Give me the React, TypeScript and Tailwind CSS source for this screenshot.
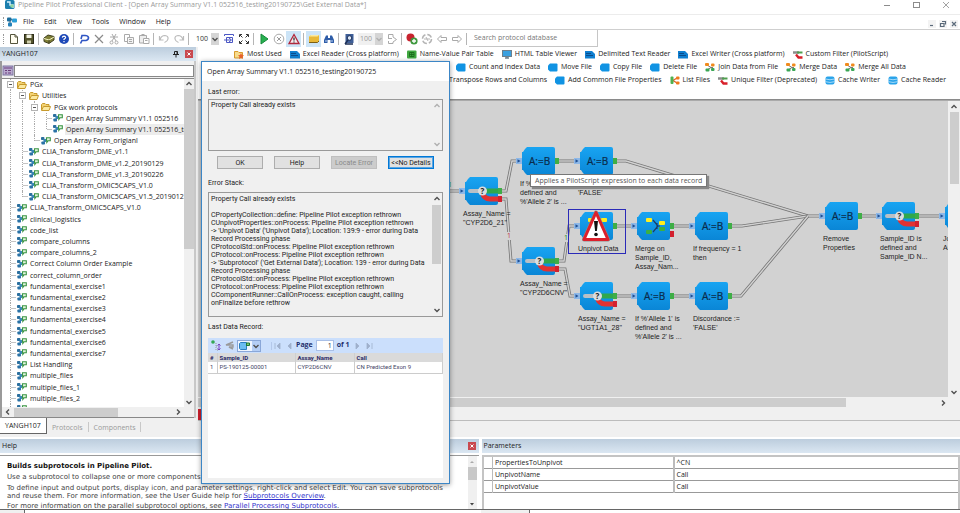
import type { ReactNode } from "react";

type TreeItem = { label: string; level: number; folder?: boolean; selected?: boolean; last?: boolean };

const TREE: TreeItem[] = [
	{ label: "PGx", level: 0, folder: true },
	{ label: "Utilities", level: 1, folder: true },
	{ label: "PGx work protocols", level: 2, folder: true },
	{ label: "Open Array Summary V1.1 052516", level: 3 },
	{ label: "Open Array Summary V1.1 052516_testing20190725", level: 3, selected: true, last: true },
	{ label: "Open Array Form_origianl", level: 2, last: true },
	{ label: "CLIA_Transform_DME_v1.1", level: 1 },
	{ label: "CLIA_Transform_DME_v1.2_20190129", level: 1 },
	{ label: "CLIA_Transform_DME_v1.3_20190226", level: 1 },
	{ label: "CLIA_Transform_OMIC5CAPS_V1.0", level: 1 },
	{ label: "CLIA_Transform_OMIC5CAPS_V1.5_20190122", level: 1, last: true },
	{ label: "CLIA_Transform_OMIC5CAPS_V1.0", level: 0 },
	{ label: "clinical_logistics", level: 0 },
	{ label: "code_list", level: 0 },
	{ label: "compare_columns", level: 0 },
	{ label: "compare_columns_2", level: 0 },
	{ label: "Correct Column Order Example", level: 0 },
	{ label: "correct_column_order", level: 0 },
	{ label: "fundamental_exercise1", level: 0 },
	{ label: "fundamental_exercise2", level: 0 },
	{ label: "fundamental_exercise3", level: 0 },
	{ label: "fundamental_exercise4", level: 0 },
	{ label: "fundamental_exercise5", level: 0 },
	{ label: "fundamental_exercise6", level: 0 },
	{ label: "fundamental_exercise7", level: 0 },
	{ label: "List Handling", level: 0 },
	{ label: "multiple_files", level: 0 },
	{ label: "multiple_files_1", level: 0 },
	{ label: "multiple_files_2", level: 0 },
	{ label: "multiple_files_3", level: 0 },
];

type NodeKind = "expr" | "split" | "unpivot" | "merge";
type CanvasNode = { x: number; y: number; kind: NodeKind; label: string[] };

const NODES: CanvasNode[] = [
	{ x: 267, y: 76, kind: "split", label: ["Assay_Name =", '"CYP2D6_21"'] },
	{ x: 324, y: 46, kind: "expr", label: ["If %'Allele 1' is", "defined and", "%'Allele 2' is ..."] },
	{ x: 382, y: 46, kind: "expr", label: ["Discordance", "'FALSE'"] },
	{ x: 382, y: 111, kind: "unpivot", label: ["Unpivot Data"] },
	{ x: 439, y: 111, kind: "merge", label: ["Merge on", "Sample_ID,", "Assay_Nam..."] },
	{ x: 497, y: 111, kind: "expr", label: ["If frequency = 1", "then"] },
	{ x: 324, y: 146, kind: "split", label: ["Assay_Name =", '"CYP2D6CNV"'] },
	{ x: 382, y: 181, kind: "split", label: ["Assay_Name =", '"UGT1A1_28"'] },
	{ x: 439, y: 181, kind: "expr", label: ["If %'Allele 1' is", "defined and", "%'Allele 2' is ..."] },
	{ x: 497, y: 181, kind: "expr", label: ["Discordance :=", "'FALSE'"] },
	{ x: 627, y: 101, kind: "expr", label: ["Remove", "Properties"] },
	{ x: 684, y: 101, kind: "split", label: ["Sample_ID is", "defined and", "Sample_ID N..."] },
	{ x: 747, y: 101, kind: "expr", label: ["Join", "Assay"] },
];

const LINKS = [
	"M240 90H261",
	"M304 90H308L314 60H318",
	"M361 60H376",
	"M419 60H428L610 115H621",
	"M534 125H544L610 115",
	"M534 195H543L610 115",
	"M304 98H308L313 160H318",
	"M361 160H366L371 125H376",
	"M361 168H367L372 195H376",
	"M419 195H433",
	"M476 195H491",
	"M419 125H433",
	"M476 125H491",
	"M664 115H678",
	"M721 115H741",
];

const STACK = [
	"Property Call already exists",
	"",
	"CPropertyCollection::define: Pipeline Pilot exception rethrown",
	"CUnpivotProperties::onProcess: Pipeline Pilot exception rethrown",
	"-> 'Unpivot Data' ('Unpivot Data'); Location: 139:9 - error during Data",
	"Record Processing phase",
	"CProtocolStd::onProcess: Pipeline Pilot exception rethrown",
	"CProtocol::onProcess: Pipeline Pilot exception rethrown",
	"-> 'Subprotocol' ('Get External Data'); Location: 139 - error during Data",
	"Record Processing phase",
	"CProtocolStd::onProcess: Pipeline Pilot exception rethrown",
	"CProtocol::onProcess: Pipeline Pilot exception rethrown",
	"CComponentRunner::CallOnProcess: exception caught, calling",
	"onFinalize before rethrow",
].join("\n");

/* ---------- Icons ---------- */

const Svg = ({ w = 12, h = 12, children }: { w?: number; h?: number; children: ReactNode }) => (
	<svg width={w} height={h} viewBox={`0 0 ${w} ${h}`} fill="none" className="shrink-0" aria-hidden="true">
		{children}
	</svg>
);

const ProtocolIcon = () => (
	<Svg w={10} h={8}>
		<rect x="0" y="0" width="3.4" height="3" rx="0.8" fill="#2b6f9e" />
		<rect x="2.4" y="2" width="3" height="3" rx="0.8" fill="#3a86b8" />
		<rect x="0.4" y="4.4" width="3.6" height="3.2" rx="0.8" fill="#2a72a6" />
		<path d="M5.5 0.8H9.3V3.8H7L5.8 5.4V3.8H5.5Z" fill="#e2f4dc" stroke="#3a9444" strokeWidth="1.1" />
	</Svg>
);

const FolderIcon = () => (
	<Svg w={10} h={8}>
		<path d="M0.5 7V1.5L1.5 0.5H4L5 1.5H8V3" fill="#f3d272" stroke="#c79a2c" />
		<path d="M0.5 7.5L2.5 3.5H9.5L8 7.5Z" fill="#fbe9a0" stroke="#c79a2c" />
	</Svg>
);

const Chevron = ({ dir, light }: { dir: "up" | "down" | "left" | "right"; light?: boolean }) => {
	const d = { up: "M1.5 5L4 2.5L6.5 5", down: "M1.5 3L4 5.5L6.5 3", left: "M5 1.5L2.5 4L5 6.5", right: "M3 1.5L5.5 4L3 6.5" };
	return (
		<Svg w={8} h={8}>
			<path d={d[dir]} stroke={light ? "#b0b0b0" : "#505050"} strokeWidth="1.4" />
		</Svg>
	);
};

type PaletteKind = "fav" | "reader" | "table" | "monitor" | "filter" | "file" | "join" | "list" | "cache";

const PaletteIcon = ({ kind }: { kind: PaletteKind }) => (
	<Svg w={10} h={9}>
		{kind === "fav" && (
			<>
				<path d="M0.5 8V1.5H4L5 2.5H8.5V8Z" fill="#f8dc8c" stroke="#d79a2c" />
				<path d="M7 3L8 5L10 5.3L8.5 6.7L9 9L7 7.8L5 9L5.5 6.7L4 5.3L6 5Z" fill="#e8622c" />
			</>
		)}
		{kind === "reader" && (
			<>
				<path d="M0 1H7L10 4V8.5H0Z" fill="#0f7fd0" />
				<path d="M1 3.5H6M1 5.5H8" stroke="#0a4c8c" />
			</>
		)}
		{kind === "table" && (
			<>
				<rect y="0.5" width="9.5" height="8" rx="1" fill="#3fa83f" />
				<path d="M2.5 2.5H7V6.5H2.5ZM2.5 4.5H7M4.7 2.5V6.5" stroke="#176417" strokeWidth="0.8" />
			</>
		)}
		{kind === "monitor" && (
			<>
				<rect x="0.5" y="0.5" width="9" height="6" fill="#3aa0e0" stroke="#6d7f8c" />
				<path d="M3 8H7M5 6.5V8" stroke="#6d7f8c" strokeWidth="1.5" />
			</>
		)}
		{kind === "filter" && (
			<>
				<path d="M0 2.5H6" stroke="#8d8d8d" strokeWidth="2.5" />
				<path d="M4 2.5H9.5" stroke="#4f9f4f" strokeWidth="2" />
				<path d="M3 4.5L5.5 7.5H9.5" stroke="#d8202a" strokeWidth="2.4" />
			</>
		)}
		{kind === "file" && <path d="M2 0.5H8.5Q9.5 0.5 9.5 1.5V7.5Q9.5 8.5 8.5 8.5H2L0 6.5V2.5Z" fill="#1093e3" />}
		{kind === "join" && (
			<>
				<path d="M2 2L6 4.5L2 7M6 4.5H8" stroke="#777" />
				<rect x="0" y="0" width="4" height="3" rx="1" fill="#f08a1c" />
				<rect x="0.5" y="5.5" width="4" height="3" rx="1" fill="#3aa655" />
				<rect x="6" y="0.5" width="3.5" height="3" rx="1" fill="#f08a1c" />
				<rect x="6" y="5" width="3.5" height="3" rx="1" fill="#3aa655" />
			</>
		)}
		{kind === "list" && (
			<>
				<path d="M3 4.5L7 2M3 4.5L7 7" stroke="#e0602c" strokeWidth="1.4" />
				<rect x="0.5" y="0.5" width="3" height="7.5" rx="1" fill="#4fb04f" />
				<rect x="6" y="0.5" width="3.5" height="3" rx="1" fill="#f07a1c" />
				<rect x="6" y="5.5" width="3.5" height="3" rx="1" fill="#f07a1c" />
			</>
		)}
		{kind === "cache" && (
			<>
				<rect x="0.5" y="0.5" width="9" height="8" rx="2" fill="#29a3ea" />
				<path d="M0.5 3Q5 4.5 9.5 3M0.5 5.7Q5 7.2 9.5 5.7" stroke="#c6e8fb" strokeWidth="0.8" />
			</>
		)}
	</Svg>
);

/* ---------- Title, menu and toolbar ---------- */

const TitleBar = () => (
	<header className="flex h-[15px] shrink-0 items-start border-b border-[#ececec] bg-white pl-[5px] leading-[10px] text-[#9a9a9a]">
		<Svg w={10} h={10}>
			<rect width="9.5" height="9" rx="1.5" fill="#1c7fae" />
			<path d="M2 2H5V5H8V8" stroke="#d6f2ff" strokeWidth="1.4" />
			<circle cx="7" cy="6" r="1.8" fill="#8fd6a0" />
		</Svg>
		<h1 className="ml-[3px] text-[7px]">
			Pipeline Pilot Professional Client - [Open Array Summary V1.1 052516_testing20190725\Get External Data*]
		</h1>
		<div className="ml-auto flex gap-[17px] pr-[9px]">
			<button type="button" aria-label="Minimize">
				<Svg>
					<path d="M3 5.5H9" stroke="#8c8c8c" />
				</Svg>
			</button>
			<button type="button" aria-label="Maximize">
				<Svg>
					<rect x="3.5" y="2.5" width="6" height="5" stroke="#8c8c8c" />
				</Svg>
			</button>
			<button type="button" aria-label="Close">
				<Svg>
					<path d="M4 2L10 8M10 2L4 8" stroke="#8c8c8c" strokeWidth="0.8" />
				</Svg>
			</button>
		</div>
	</header>
);

const MENU = ["File", "Edit", "View", "Tools", "Window", "Help"];

const MenuBar = () => (
	<nav className="flex h-[15px] shrink-0 items-center border-b border-[#cfcfcf] bg-white pl-[3px] text-[7px] text-[#222]">
		<span className="h-[10px] w-px border-l border-dotted border-[#999]" />
		<span className="ml-[3px]">
			<Svg w={10} h={10}>
				<path d="M3 2L8 4M3 3V8" stroke="#666" />
				<rect x="0" y="0.5" width="4.5" height="4" rx="1" fill="#1d6d9c" />
				<rect x="5" y="1.5" width="5" height="4" rx="1" fill="#2b9fd8" />
				<rect x="1" y="5.5" width="4" height="4" rx="1" fill="#2480b8" />
			</Svg>
		</span>
		<ul className="ml-[6px] flex gap-[10px]">
			{MENU.map((m) => (
				<li key={m}>
					<button type="button">{m}</button>
				</li>
			))}
		</ul>
		<div className="ml-auto flex gap-[3px] self-end pr-[2px] pb-px">
			{["M2 5.5H5", "M3 1.5H6.5V4.5M1.5 3.5H5V6.5H1.5Z", "M2 2L6 6M6 2L2 6"].map((d, i) => (
				<button key={d} type="button" aria-label={["Minimize document", "Restore document", "Close document"][i]} className="bg-[#f3f3f3]">
					<Svg w={8} h={8}>
						<path d={d} stroke="#5b6a7a" strokeWidth="1.2" />
					</Svg>
				</button>
			))}
		</div>
	</nav>
);

const Sep = () => (
	<span className="flex w-[5px] shrink-0 justify-center">
		<span className="h-[12px] w-px bg-[#b5b5b5]" />
	</span>
);

const Tool = ({ label, on, children }: { label: string; on?: boolean; children: ReactNode }) => (
	<button
		type="button"
		aria-label={label}
		className={`flex h-[16px] w-[15px] shrink-0 items-center justify-center ${on ? "bg-[#cce4f7]" : ""}`}
	>
		<Svg>{children}</Svg>
	</button>
);

const Zoom = ({ label, muted }: { label: string; muted?: boolean }) => (
	<label className={`relative flex h-[12px] items-center ${muted ? "bg-[#f0f0f0] text-[#999]" : "text-[#333]"}`}>
		<select
			aria-label={label}
			defaultValue="100"
			disabled={muted}
			className="h-[12px] w-[25px] appearance-none bg-transparent pl-[2px] text-[7px] leading-[12px]"
		>
			<option>100</option>
		</select>
		<span className="pointer-events-none absolute top-0 right-0 flex h-[12px] w-[8px] items-center bg-[#d5d5d5]">
			<Chevron dir="down" light={muted} />
		</span>
	</label>
);

const Toolbar = () => (
	<div className="flex h-[17px] shrink-0 items-center bg-white pl-[3px]" role="toolbar" aria-label="Standard">
		<span className="h-[10px] w-px border-l border-dotted border-[#999]" />
		<span className="w-[2px]" />
		<Tool label="New">
			<path d="M2.5 1.5H7L9.5 4V10.5H2.5Z" fill="#fffdf0" stroke="#54543c" />
			<path d="M7 1.5V4H9.5" stroke="#54543c" />
		</Tool>
		<Tool label="Save">
			<rect x="1.5" y="1.5" width="9" height="9" fill="#55552d" stroke="#2c2c18" />
			<rect x="3.5" y="1.5" width="5" height="3.5" fill="#f3f3e4" />
			<rect x="4" y="7.5" width="4" height="3" fill="#cfcfae" />
		</Tool>
		<Sep />
		<Tool label="Package">
			<path d="M1 5L5 2L11 3.5V7L6 10.5L1 8.5Z" fill="#7f7f36" stroke="#3f3f20" />
			<path d="M1 5.5L6 7L11 4" stroke="#f5f5c8" />
			<path d="M6 7V10" stroke="#3f3f20" />
		</Tool>
		<Tool label="Help">
			<circle cx="6" cy="6" r="5" fill="#1e49b8" />
			<path d="M4.3 4.6Q4.5 3.2 6 3.2Q7.7 3.3 7.6 4.6Q7.4 5.5 6 6.2V7M6 8V9.2" stroke="#fff" strokeWidth="1.2" />
		</Tool>
		<Sep />
		<Tool label="Comment">
			<path d="M2.5 10.5L4 7.5H8Q10.5 7 10.5 4.5Q10 2.5 7 2.5H4L3 6" stroke="#2f55c4" strokeWidth="1.6" />
		</Tool>
		<Tool label="Delete">
			<path d="M2 2L10 10M10 2L2 10" stroke="#8a8a8a" strokeWidth="1.2" />
		</Tool>
		<Tool label="Cut">
			<path d="M4 1L8 8M8 1L4 8M2 4H10" stroke="#aaa" />
			<circle cx="3.5" cy="9.5" r="1.5" stroke="#aaa" />
			<circle cx="8.5" cy="9.5" r="1.5" stroke="#aaa" />
		</Tool>
		<Tool label="Copy">
			<path d="M1.5 1.5H6.5V8.5H1.5Z" fill="#fff" stroke="#aaa" />
			<path d="M4.5 4.5H10.5V10.5H4.5ZM6 6.5H9M6 8.5H9" fill="#f4f4f4" stroke="#aaa" />
		</Tool>
		<Tool label="Paste">
			<path d="M1.5 2.5H8.5V10H1.5ZM3.5 1.5H6.5" fill="#eee" stroke="#aaa" />
			<path d="M5.5 5.5H11V10.5H5.5ZM7 7.5H9.5" fill="#fff" stroke="#aaa" />
		</Tool>
		<Sep />
		<Tool label="Undo">
			<path d="M1.5 3V7H5.5M2 7Q3 2.5 7 2.5Q10.5 3 10 6Q9.5 8.5 6.5 9.5" stroke="#bbb" strokeWidth="1.2" />
		</Tool>
		<Tool label="Redo">
			<path d="M10.5 3V7H6.5M10 7Q9 2.5 5 2.5Q1.5 3 2 6Q2.5 8.5 5.5 9.5" stroke="#bbb" strokeWidth="1.2" />
		</Tool>
		<Sep />
		<span className="w-[3px]" />
		<Zoom label="Zoom" />
		<span className="w-[2px]" />
		<Tool label="Fit to window">
			<path d="M1.5 3V1.5H10.5V3M3.5 4.5H9.5V9.5H3.5Z" stroke="#4b57c4" />
			<path d="M1 7H8M6 5L8.5 7L6 9" stroke="#4b57c4" />
		</Tool>
		<Tool label="Full screen">
			<path d="M1.5 4V1.5H4M8 1.5H10.5V4M10.5 8V10.5H8M4 10.5H1.5V8M2 2L4.5 4.5M10 2L7.5 4.5M2 10L4.5 7.5M10 10L7.5 7.5" stroke="#333" />
		</Tool>
		<Sep />
		<Tool label="Run">
			<path d="M3 1L10 6L3 11Z" fill="#28b050" stroke="#168a3a" />
		</Tool>
		<Tool label="Stop">
			<circle cx="6" cy="6" r="4.8" stroke="#aaa" />
			<path d="M4 4L8 8M8 4L4 8" stroke="#999" />
		</Tool>
		<Tool label="Show errors" on>
			<path d="M6 1.5L11 10.5H1Z" fill="#f6e9ee" stroke="#b0283c" strokeWidth="1.3" />
			<path d="M6 4.5V7.5M6 8.5V9.5" stroke="#222" strokeWidth="1.2" />
		</Tool>
		<Sep />
		<Tool label="Palette" on>
			<path d="M1 3.5L3 2H11V8L9.5 9.5H1Z" fill="#e8b838" />
			<path d="M1 3.5L3 2H11L9.5 3.5Z" fill="#fbe9a0" />
			<path d="M1 9.5H9.5L11 8" stroke="#7c5f14" />
		</Tool>
		<Tool label="Find">
			<path d="M3 2.5H5V5H7V2.5H9L11 7V10H7.5V7H4.5V10H1V7Z" fill="#2f5da8" />
			<path d="M2 8H4M8 8H10" stroke="#bcd4f4" />
		</Tool>
		<Sep />
		<Tool label="Find in page">
			<rect x="2.5" y="1" width="8" height="9" fill="#3f5f98" />
			<circle cx="6.5" cy="5" r="2.3" fill="#dbe7f8" stroke="#1c2f56" />
			<path d="M5 7L2 11M2 11H10" stroke="#1c2f56" strokeWidth="1.4" />
		</Tool>
		<span className="w-[2px]" />
		<Zoom label="Page zoom" muted />
		<span className="w-px" />
		<Tool label="Page layout">
			<path d="M2.5 1.5H7V4L10.5 6.5L7 9V10.5H2.5V8M2 5.5H6M2.5 5V1.5" stroke="#aaa" />
		</Tool>
		<Sep />
		<Tool label="Check in">
			<circle cx="4.5" cy="4.5" r="4" fill="#c8232f" />
			<circle cx="8" cy="8" r="3.6" fill="#3f9a3f" />
			<path d="M6 8H10M8 6V10" stroke="#fff" strokeWidth="1.3" />
		</Tool>
		<Tool label="Refresh">
			<circle cx="6" cy="6" r="4.5" stroke="#b5b5b5" strokeDasharray="5 2" strokeWidth="1.5" />
			<path d="M3 6H9M5 4L7 8" stroke="#b5b5b5" />
		</Tool>
		<Tool label="Back">
			<path d="M1.5 6L5 2.5V4.5H10.5V7.5H5V9.5Z" stroke="#aaa" />
		</Tool>
		<Tool label="Forward">
			<path d="M10.5 6L7 2.5V4.5H1.5V7.5H7V9.5Z" stroke="#aaa" />
		</Tool>
		<Sep />
		<input
			type="search"
			aria-label="Search protocol database"
			placeholder="Search protocol database"
			className="h-[17px] w-[129px] border-r border-b border-[#c6c6c6] bg-white pb-px pl-[5px] text-[7px] placeholder:text-[#777]"
		/>
	</div>
);

/* ---------- Left dock ---------- */

const CloseBox = ({ label }: { label: string }) => (
	<button type="button" aria-label={label} className="flex size-[8px] items-center justify-center bg-[#c9494f]">
		<Svg w={8} h={8}>
			<path d="M2.5 2.5L5.5 5.5M5.5 2.5L2.5 5.5" stroke="#fff" />
		</Svg>
	</button>
);

const PaneHeader = ({ title, children }: { title: string; children?: ReactNode }) => (
	<div className="flex h-[14px] shrink-0 items-center justify-between bg-linear-to-b from-[#bccddd] to-[#dbe7f2] pr-[3px] pl-[2px] text-[7px] text-[#222]">
		<h2>{title}</h2>
		<div className="flex items-center gap-[6px]">{children}</div>
	</div>
);

const TreeRow = ({ item }: { item: TreeItem }) => (
	<li className="flex min-h-0 flex-1 items-center pl-1">
		{Array.from({ length: item.level + 1 }, (_, l) => {
			const own = l === item.level;
			return (
				<span key={l} className="flex w-3 shrink-0 self-stretch pl-[6px]">
					<span className={`w-px border-l border-dotted border-[#aaa] ${own && item.last ? "h-1/2" : ""}`} />
					{own && !item.folder && <span className="h-px w-[5px] self-center bg-[#c4c4c4]" />}
					{own && item.folder && (
						<span className="-ml-[4px] self-center">
							<Svg w={7} h={7}>
								<rect x="0.5" y="0.5" width="6" height="6" fill="#fff" stroke="#b4b4b4" />
								<path d="M2 3.5H5" stroke="#555" />
							</Svg>
						</span>
					)}
				</span>
			);
		})}
		<span className="ml-px flex shrink-0">{item.folder ? <FolderIcon /> : <ProtocolIcon />}</span>
		<span className={`ml-[2px] px-px leading-[11px] whitespace-nowrap ${item.selected ? "bg-[#ececec]" : ""}`}>{item.label}</span>
	</li>
);

const LeftDock = () => (
	<aside className="flex w-[196px] shrink-0 flex-col bg-[#f0f0f0]">
		<PaneHeader title="YANGH107">
			<Svg w={6} h={8}>
				<path d="M1.5 4.5V1.5H4.5V4.5M0 4.5H6M3 4.5V7.5M4 1.5V4.5" stroke="#222" />
			</Svg>
			<CloseBox label="Close pane" />
		</PaneHeader>
		<div className="flex min-h-0 flex-1 flex-col border-x-2 border-[#9a9a9a] border-r-[#c8c8c8] bg-[#f0f0f0]">
			<div className="flex h-[17px] shrink-0 items-center pt-[2px]">
				<Svg w={12} h={11}>
					<rect x="1" y="1" width="10" height="9" fill="#b9a9cf" stroke="#7a74a0" />
					<path d="M2 3H10M3 5.5H5M6 5.5H9M3 8H5M6 8H9" stroke="#6a3f7c" />
				</Svg>
				<input
					type="text"
					aria-label="Filter"
					className="h-[12px] min-w-0 flex-1 border border-[#888] bg-white px-1 text-[7px]"
				/>
			</div>
			<div className="flex min-h-0 flex-1 border-t border-[#888] bg-white">
				<ul className="-ml-[2px] flex h-[336px] min-w-0 flex-1 flex-col self-start overflow-hidden text-[7px] text-[#222]">
					{TREE.map((item) => (
						<TreeRow key={item.label + item.level} item={item} />
					))}
				</ul>
				<div className="flex w-[10px] shrink-0 flex-col items-center bg-[#f0f0f0]">
					<div className="flex h-[10px] items-center">
						<Chevron dir="up" />
					</div>
					<div className="h-[160px] w-full bg-[#cdcdcd]" />
					<div className="mt-auto flex h-[10px] items-center">
						<Chevron dir="down" />
					</div>
				</div>
			</div>
			<div className="relative z-10 flex h-[11px] shrink-0 items-center border-b border-[#888] bg-[#f0f0f0] pl-[2px]">
				<Chevron dir="left" />
				<div className="ml-[2px] h-[9px] w-[104px] bg-[#cdcdcd]" />
				<div className="mr-[12px] ml-auto">
					<Chevron dir="right" />
				</div>
			</div>
		</div>
		<div className="flex h-[19px] shrink-0 items-start bg-[#f0f0f0] text-[7px] text-[#9a9a9a]" role="tablist">
			<button type="button" role="tab" className="h-[16px] border-r border-b border-[#666] bg-white px-[5px] pt-px text-[#222]">
				YANGH107
			</button>
			<button type="button" role="tab" className="mt-[4px] h-[10px] border-r border-[#c8c8c8] px-[5px] leading-[9px]">
				Protocols
			</button>
			<button type="button" role="tab" className="mt-[4px] h-[10px] border-r border-[#c8c8c8] px-[5px] leading-[9px]">
				Components
			</button>
		</div>
	</aside>
);

/* ---------- Palette ---------- */

const PALETTE: { pad: string; items: [PaletteKind, string][] }[] = [
	{
		pad: "pr-[72px]",
		items: [
			["fav", "Most Used"],
			["reader", "Excel Reader (Cross platform)"],
			["table", "Name-Value Pair Table"],
			["monitor", "HTML Table Viewer"],
			["reader", "Delimited Text Reader"],
			["reader", "Excel Writer (Cross platform)"],
			["filter", "Custom Filter (PilotScript)"],
		],
	},
	{
		pad: "pr-[54px]",
		items: [
			["file", "Count and Index Data"],
			["file", "Move File"],
			["file", "Copy File"],
			["file", "Delete File"],
			["join", "Join Data from File"],
			["join", "Merge Data"],
			["join", "Merge All Data"],
		],
	},
	{
		pad: "pr-[14px]",
		items: [
			["file", "Transpose Rows and Columns"],
			["file", "Add Common File Properties"],
			["list", "List Files"],
			["filter", "Unique Filter (Deprecated)"],
			["cache", "Cache Writer"],
			["cache", "Cache Reader"],
		],
	},
];

const Palette = () => (
	<div className="flex h-[53px] shrink-0 flex-col border-b border-[#8a8a8a] bg-white pt-px text-[7px] text-[#222]">
		{PALETTE.map((row) => (
			<ul key={row.pad} className={`flex h-[13px] items-center justify-end gap-[8px] ${row.pad}`}>
				{row.items.map(([kind, label]) => (
					<li key={label}>
						<button type="button" className="flex items-center gap-[3px] whitespace-nowrap">
							<PaletteIcon kind={kind} />
							{label}
						</button>
					</li>
				))}
			</ul>
		))}
	</div>
);

/* ---------- Canvas ---------- */

const NodeShape = ({ kind }: { kind: NodeKind }) => (
	<svg width="44" height="28" viewBox="-6 0 44 28" fill="none" aria-hidden="true">
		<rect x="-6" y="11" width="6" height="6" fill="#8db8e8" />
		<path d="M-4.5 12.2L-1.5 14L-4.5 15.8Z" fill="#1f4f94" />
		<path d="M5 0H31Q33 0 33 2V26Q33 28 31 28H5L3 26L1 23H0V5H1L3 2Z" fill="url(#nodeFill)" />
		<rect x="33" y="11" width="4" height="6" fill="#3fae46" />
		{kind === "expr" && (
			<text x="7" y="18" fontSize="10" fill="#0b2a4a" stroke="#0b2a4a" strokeWidth="0.2">
				A:=B
			</text>
		)}
		{kind === "split" && (
			<>
				<rect x="33" y="19" width="4" height="6" fill="#d3202e" />
				<path d="M17 15Q19 22 25 22H33" stroke="#e23232" strokeWidth="5" />
				<path d="M5 14H16" stroke="#b9c0c6" strokeWidth="4" strokeLinecap="round" />
				<path d="M19 14H33" stroke="#2fa84c" strokeWidth="5" />
				<circle cx="17.5" cy="14" r="4.5" fill="#d9dde0" />
				<text x="15.5" y="17" fontSize="8" fontWeight="bold" fill="#222">
					?
				</text>
			</>
		)}
		{kind === "merge" && (
			<>
				<rect x="33" y="19" width="4" height="6" fill="#d3202e" />
				<path d="M16 8L21 14L16 20M20 11V17M21 14H23" stroke="#1d3d66" strokeWidth="1.2" />
				<rect x="9" y="6" width="6" height="4" rx="1" fill="#ffee20" />
				<rect x="22" y="9" width="6" height="4" rx="1" fill="#ffee20" />
				<rect x="9" y="18" width="6" height="4" rx="1" fill="#3cb043" />
				<rect x="22" y="15" width="6" height="4" rx="1" fill="#3cb043" />
			</>
		)}
		{kind === "unpivot" && (
			<>
				<rect x="8" y="6" width="6" height="4" rx="1" fill="#ffee20" />
				<rect x="21" y="6" width="6" height="4" rx="1" fill="#ffee20" />
			</>
		)}
	</svg>
);

const Canvas = () => (
	<div className="relative min-w-0 flex-1 overflow-hidden bg-[#d2d2d2]">
		<svg width="750" height="297" viewBox="0 0 750 297" fill="none" className="absolute top-0 left-0 max-w-none" aria-hidden="true">
			<defs>
				<linearGradient id="nodeFill" x1="0" y1="0" x2="0" y2="1">
					<stop offset="0" stopColor="#18a4f2" />
					<stop offset="1" stopColor="#0a86d6" />
				</linearGradient>
			</defs>
			{LINKS.map((d) => (
				<g key={d}>
					<path d={d} stroke="#757575" strokeWidth="3" />
					<path d={d} stroke="#d2d2d2" strokeWidth="1.4" />
				</g>
			))}
		</svg>
		<span className="absolute top-[80px] left-[250px] text-[7px] leading-[8px] text-[#2c9a3c]">1</span>
		<span className="absolute top-[131px] left-[309px] bg-[#d2d2d2] text-[7px] leading-[8px] text-[#c03048]">1</span>
		<span className="absolute top-[133px] left-[366px] bg-[#d2d2d2] text-[7px] leading-[8px] text-[#1c8a2c]">1</span>
		{NODES.map((n) => (
			<figure key={`${n.x}-${n.y}`} className="absolute" style={{ left: n.x - 6, top: n.y }}>
				<NodeShape kind={n.kind} />
				<figcaption className="mt-[4px] ml-[4px] flex flex-col font-['Liberation_Sans',sans-serif] text-[7px] leading-[9px] whitespace-nowrap text-[#222]">
					{n.label.map((line) => (
						<span key={line}>{line}</span>
					))}
				</figcaption>
			</figure>
		))}
		<div className="absolute top-[108px] left-[370px] h-[45px] w-[58px] border border-[#2a2ab8]" />
		<svg width="28" height="32" viewBox="0 0 28 32" className="absolute top-[109px] left-[384px]" aria-hidden="true">
			<path d="M14 2.5L26 29.5H2Z" fill="#fff" stroke="#8c8c8c" strokeWidth="4" strokeLinejoin="round" />
			<path d="M14 2.5L26 29.5H2Z" fill="#fff" stroke="#dc202c" strokeWidth="3" strokeLinejoin="round" />
			<path d="M12 11H16L14.9 21H13.1Z" fill="#111" />
			<circle cx="14" cy="24.5" r="1.8" fill="#111" />
		</svg>
		<div
			role="tooltip"
			className="absolute top-[73px] left-[332px] border border-[#777] bg-white px-[4px] text-[7px] leading-[11px] whitespace-nowrap text-[#555] shadow-[2px_2px_1px_#888]"
		>
			Applies a PilotScript expression to each data record
		</div>
	</div>
);

const Workspace = () => (
	<main className="flex min-w-0 flex-1 flex-col bg-[#f0f0f0] pl-[2px]">
		<Palette />
		<div className="flex min-h-0 flex-1 border-t border-[#aaa]">
			<Canvas />
			<div className="flex w-[12px] shrink-0 flex-col items-center bg-[#f0f0f0]">
				<div className="flex h-[11px] items-center">
					<Chevron dir="up" />
				</div>
				<div className="h-[72px] w-[9px] bg-[#cdcdcd]" />
				<div className="mt-auto flex h-[11px] items-center">
					<Chevron dir="down" />
				</div>
			</div>
		</div>
		<div className="flex h-[11px] shrink-0 items-center">
			<div className="h-[9px] w-[85%] bg-[#cdcdcd]" />
			<div className="mr-[13px] ml-auto">
				<Chevron dir="right" />
			</div>
		</div>
		<div className="h-[13px] shrink-0 border-b border-[#bcbcbc]">
			<div className="mt-px h-[11px] w-[6px] bg-[#d0202c]" />
		</div>
		<div className="h-[16px] shrink-0" />
	</main>
);

/* ---------- Bottom docks ---------- */

const HelpPane = () => (
	<section className="flex min-w-0 flex-1 flex-col">
		<PaneHeader title="Help">
			<CloseBox label="Close help" />
		</PaneHeader>
		<div className="mt-[2px] flex min-h-0 flex-1 border-t border-[#999] bg-white">
			<div className="min-w-0 flex-1 overflow-hidden pt-[5px] pl-[7px] font-['DejaVu_Sans',sans-serif] text-[7px] leading-[8px] whitespace-nowrap text-[#444]">
				<p className="font-bold leading-[10px] text-[#111]">Builds subprotocols in Pipeline Pilot.</p>
				<p className="mt-[2px]">Use a subprotocol to collapse one or more components into a single component.</p>
				<p className="mt-[3px]">
					To define input and output ports, display icon, and parameter settings, right-click and select Edit. You can save subprotocols
					<br />
					and reuse them. For more information, see the User Guide help for{" "}
					<a href="#subprotocols" className="text-[#3333cc] underline">
						Subprotocols Overview
					</a>
					.
				</p>
				<p className="mt-[2px]">
					For more information on the parallel subprotocol options, see{" "}
					<a href="#parallel" className="text-[#3333cc] underline">
						Parallel Processing Subprotocols
					</a>
					.
				</p>
			</div>
			<div className="mr-[2px] flex w-[9px] shrink-0 flex-col items-center bg-[#f0f0f0]">
				<div className="flex h-[11px] items-center">
					<Svg w={8} h={8}>
						<path d="M2 5L4 3L6 5Z" fill="#aaa" />
					</Svg>
				</div>
				<div className="h-[13px] w-full bg-[#c8c8c8]" />
				<div className="mt-auto flex h-[11px] items-center">
					<Svg w={8} h={8}>
						<path d="M2 3L4 5.5L6 3Z" fill="#444" />
					</Svg>
				</div>
			</div>
		</div>
	</section>
);

const PARAMS = [
	["PropertiesToUnpivot", "^CN"],
	["UnpivotName", "Call"],
	["UnpivotValue", "Call"],
];

const ParametersPane = () => (
	<section className="flex min-w-0 flex-1 flex-col">
		<PaneHeader title="Parameters" />
		<div className="mt-[2px] min-h-0 flex-1 border-x-2 border-t-2 border-[#c4c4c4] bg-white">
			<table className="w-full table-fixed border-collapse text-[7px] text-[#222]">
				<colgroup>
					<col className="w-[9px]" />
					<col className="w-[181px]" />
					<col />
				</colgroup>
				<tbody>
					{PARAMS.map(([name, value]) => (
						<tr key={name} className="border-b border-[#999] leading-[11px]">
							<td className="border-r border-[#bbb]" />
							<th scope="row" className="border-r-2 border-[#bbb] p-0 pl-[2px] text-left font-normal">
								{name}
							</th>
							<td className="p-0 pl-[2px]">{value}</td>
						</tr>
					))}
				</tbody>
			</table>
		</div>
	</section>
);

/* ---------- Error dialog ---------- */

const DIALOG_BUTTONS = [
	{ label: "OK", style: "border-[#adadad] bg-[#e1e1e1]" },
	{ label: "Help", style: "border-[#adadad] bg-[#e1e1e1]" },
	{ label: "Locate Error", style: "border-[#bfbfbf] bg-[#cccccc] text-[#8a8a8a]", disabled: true },
	{ label: "<<No Details", style: "border-[#0078d7] bg-[#e1e1e1] ring-1 ring-inset ring-[#5aa5e2]" },
];

const PageArrow = ({ d, label }: { d: string; label: string }) => (
	<button type="button" aria-label={label}>
		<Svg w={8} h={8}>
			<path d={d} fill="#9fb0cc" stroke="#9fb0cc" strokeWidth="0.8" />
		</Svg>
	</button>
);

const ErrorDialog = () => (
	<div
		role="dialog"
		aria-label="Open Array Summary V1.1 052516_testing20190725"
		className="absolute top-[61px] left-[201px] z-20 flex h-[423px] w-[249px] flex-col border border-[#3c86c6] bg-[#f0f0f0] font-['Roboto',sans-serif] text-[7px] text-[#222] shadow-[0_1px_5px_#0006]"
	>
		<h2 className="h-[19px] shrink-0 bg-white pl-[5px] font-['Open_Sans',sans-serif] leading-[20px]">
			Open Array Summary V1.1 052516_testing20190725
		</h2>
		<div className="flex min-h-0 flex-1 flex-col px-[6px] pb-[5px]">
			<label htmlFor="last-error" className="mt-[6px] leading-[10px]">
				Last error:
			</label>
			<div className="mt-[2px] flex h-[52px] shrink-0 border border-[#999]">
				<textarea
					id="last-error"
					readOnly
					defaultValue="Property Call already exists"
					className="min-w-0 flex-1 resize-none overflow-hidden pt-px pl-[2px] leading-[8px]"
				/>
				<div className="flex w-[11px] flex-col items-center justify-between py-[2px]">
					<Chevron dir="up" light />
					<Chevron dir="down" light />
				</div>
			</div>
			<div className="mt-[5px] flex shrink-0 gap-[11px] pl-[9px]">
				{DIALOG_BUTTONS.map((b) => (
					<button key={b.label} type="button" disabled={b.disabled} className={`h-[13px] w-[46px] border leading-[10px] ${b.style}`}>
						{b.label}
					</button>
				))}
			</div>
			<label htmlFor="error-stack" className="mt-[9px] leading-[10px]">
				Error Stack:
			</label>
			<div className="mt-[4px] flex h-[125px] shrink-0 border border-[#999]">
				<textarea
					id="error-stack"
					readOnly
					defaultValue={STACK}
					className="min-w-0 flex-1 resize-none overflow-hidden pt-[2px] pl-[2px] leading-[8px] whitespace-pre"
				/>
				<div className="flex w-[11px] flex-col items-center py-[2px]">
					<Chevron dir="up" />
					<div className="mt-[2px] h-[59px] w-[9px] bg-[#cdcdcd]" />
					<div className="mt-auto">
						<Chevron dir="down" />
					</div>
				</div>
			</div>
			<h3 className="mt-[5px] leading-[10px]">Last Data Record:</h3>
			<div className="mt-[6px] min-h-0 flex-1 bg-white">
				<div className="flex h-[15px] items-center bg-[#cbdffc] pl-[3px] text-[#1f2f6c]">
					<Svg w={10} h={11}>
						<circle cx="2" cy="2" r="1.8" fill="#33a852" />
						<path d="M5 3V10H7M5 6H7" stroke="#999" strokeDasharray="1 1" />
						<path d="M8 4V10M6.5 5.5L8 4L9.5 5.5M6.5 8.5L8 10L9.5 8.5" stroke="#7a3fc0" />
					</Svg>
					<span className="ml-[4px]">
						<Svg w={9} h={9}>
							<path d="M8 1L1 4H8V6H4L8 8" stroke="#9a9a9a" strokeWidth="1.4" />
						</Svg>
					</span>
					<span className="ml-[3px] flex h-[12px] w-[24px] items-center justify-between border border-[#8aa7d8] bg-[#eef5ff]">
						<Svg w={13} h={10}>
							<path d="M2.5 1.5H8.5V8.5H2.5L1.5 7.5V2.5Z" fill="#6bbdf2" stroke="#2b7fc0" />
							<path d="M8.5 5V2H11.5V4.5H9" fill="#7cc87c" stroke="#1f7a34" />
						</Svg>
						<span className="flex h-full items-center bg-[#b4cef6]">
							<Chevron dir="down" />
						</span>
					</span>
					<div className="ml-[10px] flex gap-[4px] border-l border-[#b4c8ea] pl-px">
						<PageArrow label="First page" d="M2 1V7M7 1L4 4L7 7Z" />
						<PageArrow label="Previous page" d="M6 1L3 4L6 7Z" />
					</div>
					<label className="ml-[3px] flex items-center gap-[3px] font-['Open_Sans',sans-serif] font-bold">
						Page
						<input
							type="text"
							defaultValue="1"
							className="h-[11px] w-[18px] border border-[#a9bfe6] bg-white pr-px text-right font-normal text-[#333]"
						/>
					</label>
					<span className="ml-[3px] font-['Open_Sans',sans-serif] font-bold">of 1</span>
					<div className="ml-[4px] flex gap-[4px]">
						<PageArrow label="Next page" d="M2 1L5 4L2 7Z" />
						<PageArrow label="Last page" d="M1 1L4 4L1 7ZM6 1V7" />
					</div>
				</div>
				<table className="w-full table-fixed border-collapse text-left text-[6px] leading-[8px] text-[#444466]">
					<colgroup>
						<col className="w-[9px]" />
						<col className="w-[78px]" />
						<col className="w-[59px]" />
						<col />
					</colgroup>
					<thead>
						<tr className="h-[9px] bg-[#dadada] text-[#2a2a66]">
							{["#", "Sample_ID", "Assay_Name", "Call"].map((h) => (
								<th key={h} className="border-r border-[#cfcfcf] p-0 pl-[2px] font-bold">
									{h}
								</th>
							))}
						</tr>
					</thead>
					<tbody>
						<tr className="h-[11px] border-b border-[#ccc]">
							{["1", "PS-190125-00001", "CYP2D6CNV", "CN Predicted Exon 9"].map((c) => (
								<td key={c} className="border-r border-[#ccc] p-0 pl-[2px]">
									{c}
								</td>
							))}
						</tr>
					</tbody>
				</table>
			</div>
		</div>
	</div>
);

const App = () => (
	<div className="relative flex h-screen flex-col overflow-hidden bg-[#f0f0f0] font-['Open_Sans','Noto_Sans',sans-serif]">
		<TitleBar />
		<MenuBar />
		<Toolbar />
		<div className="flex min-h-0 flex-1">
			<LeftDock />
			<Workspace />
		</div>
		<div className="flex h-[73px] shrink-0 gap-[3px] border-b border-[#666] bg-white pt-[2px]">
			<HelpPane />
			<ParametersPane />
		</div>
		<footer className="flex h-[3px] shrink-0 bg-white">
			<div className="w-[25px] border-r border-[#666] bg-[#f0f0f0]" />
			<div className="ml-[456px] w-[49px] border-r border-[#666] bg-[#f0f0f0]" />
		</footer>
		<ErrorDialog />
	</div>
);

export default App;
